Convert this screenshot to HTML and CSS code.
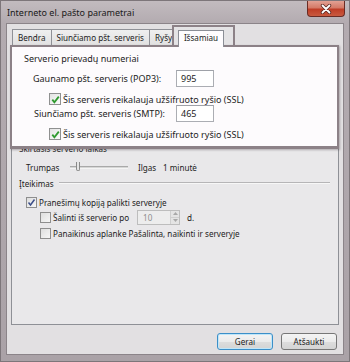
FILE: index.html
```html
<!DOCTYPE html>
<html>
<head>
<meta charset="utf-8">
<link rel="stylesheet" href="styles.css">
</head>
<body>
<div class="window">
  <div class="titlebar">
    <span class="title">Interneto el. pašto parametrai</span>
    <div class="close">
      <svg width="14" height="10" viewBox="0 0 14 10"><path d="M3.5 1.5 L10.5 8.5 M10.5 1.5 L3.5 8.5" stroke="#5a2a24" stroke-width="3.4" stroke-linecap="round"/><path d="M3.5 1.5 L10.5 8.5 M10.5 1.5 L3.5 8.5" stroke="#ffffff" stroke-width="1.8" stroke-linecap="round"/></svg>
    </div>
  </div>
  <div class="client">
    <div class="tabs">
      <div class="tab">Bendra</div>
      <div class="tab">Siunčiamo pšt. serveris</div>
      <div class="tab">Ryšys</div>
    </div>
    <div class="panel">
      <div class="hidden-area"></div>
      <div class="label">Skirtasis serverio laikas</div>
      <div class="timeout">
        <span class="t-short">Trumpas</span>
        <div class="slider"><div class="track"></div><div class="thumb"></div></div>
        <span class="t-long">Ilgas</span>
        <span>1 minutė</span>
      </div>
      <div class="group"><span>Įteikimas</span><div class="rule"></div></div>
      <div class="crow">
        <span class="cb"><svg width="9" height="9" viewBox="0 0 9 9"><path d="M1.5 4.5 L3.5 7 L7.5 1.5" stroke="#3d4f8a" stroke-width="1.5" fill="none"/></svg></span>
        <span class="ctext">Pranešimų kopiją palikti serveryje</span>
      </div>
      <div class="crow sub spinrow">
        <span class="cb"></span>
        <span class="ctext fixed">Šalinti iš serverio po</span>
        <div class="spin">
          <span class="spinval">10</span>
          <div class="spinbtns">
            <div class="sb"><svg width="5" height="3" viewBox="0 0 5 3"><path d="M0 3 L2.5 0 L5 3Z" fill="#a8a8a8"/></svg></div>
            <div class="sb"><svg width="5" height="3" viewBox="0 0 5 3"><path d="M0 0 L2.5 3 L5 0Z" fill="#a8a8a8"/></svg></div>
          </div>
        </div>
        <span class="days">d.</span>
      </div>
      <div class="crow sub last">
        <span class="cb"></span>
        <span class="ctext">Panaikinus aplanke Pašalinta, naikinti ir serveryje</span>
      </div>
    </div>
    <div class="buttons">
      <div class="btn def">Gerai</div>
      <div class="btn">Atšaukti</div>
    </div>
  </div>

  <div class="overlay">
    <div class="cap"><div class="seltab">Išsamiau</div></div>
    <div class="box">
      <div class="heading">Serverio prievadų numeriai</div>
      <div class="prow">
        <span>Gaunamo pšt. serveris (POP3):</span>
        <div class="inp">995</div>
      </div>
      <div class="ocheck">
        <span class="ocb"><svg width="9" height="9" viewBox="0 0 9 9"><path d="M1.3 4.6 L3.4 7.2 L7.8 1.6" stroke="#2f9a2f" stroke-width="1.8" fill="none"/></svg></span>
        <span>Šis serveris reikalauja užšifruoto ryšio (SSL)</span>
      </div>
      <div class="prow second">
        <span>Siunčiamo pšt. serveris (SMTP):</span>
        <div class="inp">465</div>
      </div>
      <div class="ocheck">
        <span class="ocb"><svg width="9" height="9" viewBox="0 0 9 9"><path d="M1.3 4.6 L3.4 7.2 L7.8 1.6" stroke="#2f9a2f" stroke-width="1.8" fill="none"/></svg></span>
        <span>Šis serveris reikalauja užšifruoto ryšio (SSL)</span>
      </div>
    </div>
  </div>
</div>
</body>
</html>
```
FILE: styles.css
```css
* { box-sizing: border-box; }
html, body { margin: 0; padding: 0; }
body {
  width: 350px;
  height: 362px;
  overflow: hidden;
  font-family: "Noto Sans", sans-serif;
  font-size: 8.1px;
  color: #1c1c1c;
  background: #ffffff;
}

.window {
  position: relative;
  width: 350px;
  height: 362px;
  border: 1px solid #7d767a;
  background: linear-gradient(180deg, #c2bbbf 0px, #b3abb0 22px, #aaa2a7 100%);
  display: flex;
  flex-direction: column;
}

.titlebar {
  height: 22px;
  display: flex;
  align-items: center;
}
.title {
  padding-left: 6px;
  font-size: 9px;
  color: #1a1a1a;
}
.close {
  align-self: flex-start;
  margin-left: auto;
  margin-right: 4px;
  width: 38px;
  height: 16px;
  border: 1px solid #6a2b24;
  border-top: none;
  border-radius: 0 0 4px 4px;
  background: linear-gradient(180deg, #e2a193 0%, #d47a67 45%, #bf3d26 55%, #c95a3f 100%);
  display: flex;
  align-items: center;
  justify-content: center;
}

.client {
  margin: 0 5px;
  height: 332px;
  border: 1px solid #8b8489;
  background: #e2e0e2;
  padding: 5px 4px 0 4px;
  display: flex;
  flex-direction: column;
}

.tabs {
  display: flex;
  height: 16px;
  margin-left: 1px;
}
.tab {
  height: 16px;
  padding: 0 5px;
  border: 1px solid #8f9197;
  border-bottom: none;
  margin-right: -1px;
  background: linear-gradient(180deg, #efefef, #e1e1e1);
  display: flex;
  align-items: center;
  color: #1c1c1c;
}

.panel {
  height: 280px;
  border: 1px solid #8e9096;
  background: #e9e8ea;
  padding: 0 7px;
  display: flex;
  flex-direction: column;
}
.hidden-area { height: 96px; flex: none; }
.label { height: 14px; line-height: 14px; }

.timeout {
  margin-top: 4px;
  height: 14px;
  padding-left: 7px;
  display: flex;
  align-items: center;
}
.t-short { width: 44px; }
.slider {
  position: relative;
  width: 58px;
  height: 12px;
  display: flex;
  align-items: center;
}
.track {
  width: 100%;
  height: 3px;
  border-top: 1px solid #a9a9a9;
  border-bottom: 1px solid #f4f4f4;
  background: #d6d6d6;
}
.thumb {
  position: absolute;
  left: 6px;
  top: 1px;
  width: 4px;
  height: 9px;
  border: 1px solid #8a8a8a;
  border-top: none;
  background: #e6e6e6;
  border-radius: 0 0 2px 2px;
}
.t-long { margin-left: 10px; width: 25px; }

.group {
  margin-top: 2px;
  height: 14px;
  display: flex;
  align-items: center;
}
.rule {
  flex: 1;
  margin-left: 5px;
  margin-right: 1px;
  height: 2px;
  border-top: 1px solid #b6b5b7;
  border-bottom: 1px solid #f7f7f7;
}

.crow {
  margin-top: 5px;
  height: 14px;
  padding-left: 7px;
  display: flex;
  align-items: center;
}
.crow.sub { padding-left: 21px; }
.spinrow { margin-top: 0; height: 16px; }
.crow.last { margin-top: 1px; }
.cb {
  width: 11px;
  height: 11px;
  flex: none;
  border: 1px solid #8e8e8e;
  background: linear-gradient(135deg, #dedede, #f6f6f6);
  display: flex;
  align-items: center;
  justify-content: center;
}
.ctext { margin-left: 2px; }
.ctext.fixed { width: 84px; }
.spin {
  width: 43px;
  height: 15px;
  border: 1px solid #bdbdbd;
  background: #ededed;
  display: flex;
}
.spinval {
  flex: 1;
  padding-left: 5px;
  color: #8d8d8d;
  display: flex;
  align-items: center;
}
.spinbtns {
  width: 9px;
  display: flex;
  flex-direction: column;
}
.sb {
  flex: 1;
  border-left: 1px solid #cfcfcf;
  background: #e4e4e4;
  display: flex;
  align-items: center;
  justify-content: center;
}
.sb + .sb { border-top: 1px solid #cfcfcf; }
.days { margin-left: 7px; }

.buttons {
  margin-top: 8px;
  display: flex;
  justify-content: flex-end;
  gap: 8px;
  padding-right: 2px;
}
.btn {
  width: 56px;
  height: 17px;
  border: 1px solid #777777;
  border-radius: 3px;
  background: linear-gradient(180deg, #f4f4f4 0%, #ebebeb 50%, #dddddd 51%, #d4d4d4 100%);
  display: flex;
  align-items: center;
  justify-content: center;
  color: #1c1c1c;
}
.btn.def {
  border-color: #3c8fc8;
  box-shadow: inset 0 0 0 1px #bfe6f9;
}

/* Highlight overlay */
.overlay {
  position: absolute;
  left: 9px;
  top: 24px;
  width: 329px;
  display: flex;
  flex-direction: column;
  font-size: 9px;
}
.cap {
  margin-left: 162px;
  width: 63px;
  height: 20px;
  border: 2px solid #8c8187;
  border-bottom: none;
  background: #e4e3e5;
  padding: 3px 0 0 4px;
}
.seltab {
  position: relative;
  z-index: 2;
  width: 46px;
  height: 17px;
  border: 1px solid #8b8e96;
  border-bottom: none;
  background: #fefcfe;
  display: flex;
  justify-content: center;
  padding-top: 1px;
  font-size: 8.1px;
}
.box {
  height: 104px;
  border: 2px solid #8c8187;
  border-bottom-width: 3px;
  background: #fdfbfd;
  box-shadow: 1px 1px 2px rgba(60, 50, 55, 0.35);
  display: flex;
  flex-direction: column;
}
.heading {
  margin-top: 5px;
  padding-left: 12px;
  height: 14px;
  line-height: 14px;
}
.prow {
  margin-top: 4px;
  height: 17px;
  padding-left: 21px;
  display: grid;
  grid-template-columns: 143px 38px;
  align-items: center;
}
.prow.second { margin-top: 0; padding-left: 22px; grid-template-columns: 142px 38px; }
.inp {
  height: 17px;
  border: 1px solid #abadb3;
  border-top-color: #9ea1a8;
  background: #ffffff;
  padding-left: 4px;
  display: flex;
  align-items: center;
}
.ocheck {
  margin-top: 6px;
  height: 12px;
  padding-left: 37px;
  display: flex;
  align-items: center;
  gap: 2px;
}
.ocb {
  width: 12px;
  height: 12px;
  border: 1px solid #8f9090;
  background: linear-gradient(135deg, #e3e3e3, #fbfbfb);
  display: flex;
  align-items: center;
  justify-content: center;
}
```
